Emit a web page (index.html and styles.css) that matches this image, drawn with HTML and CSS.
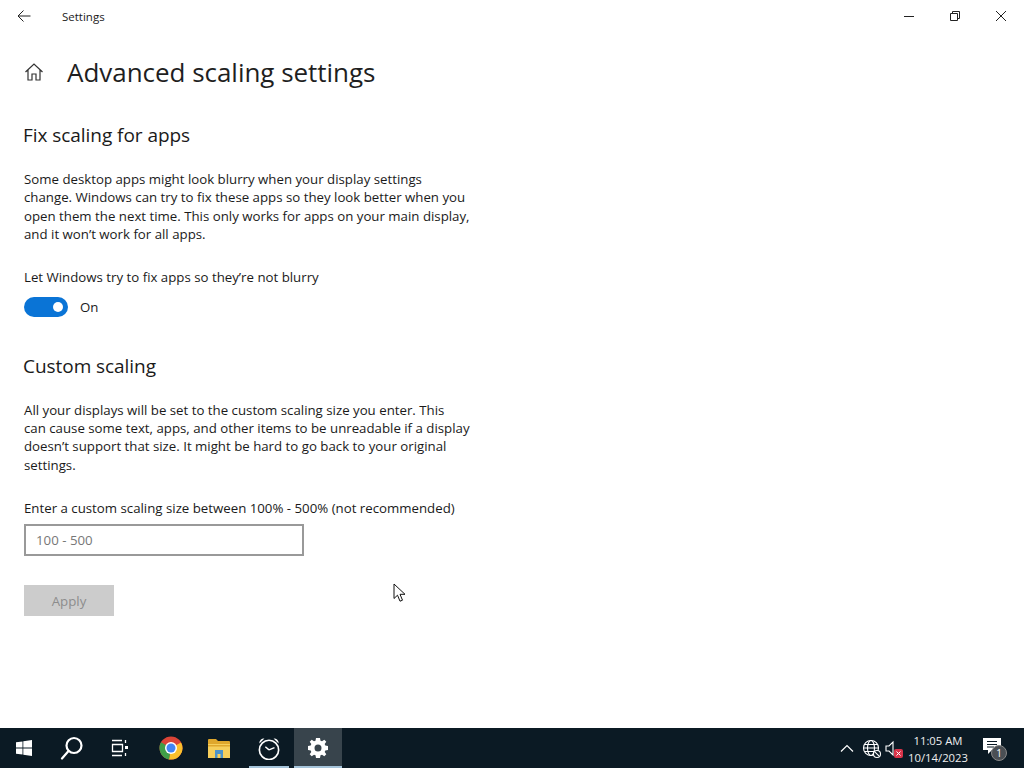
FILE: index.html
```html
<!DOCTYPE html>
<html lang="en">
<head>
<meta charset="utf-8">
<title>Settings</title>
<link rel="stylesheet" href="styles.css">
</head>
<body>
<div class="window">
  <header class="titlebar">
    <button class="back" aria-label="Back">
      <svg width="14" height="14" viewBox="0 0 14 14" class="stroke-dark"><path d="M1 7H13.500M6.500 1.500 1 7l5.500 5.500"/></svg>
    </button>
    <span class="app-name">Settings</span>
    <div class="controls">
      <span class="ctl"><svg width="12" height="12" viewBox="0 0 12 12" class="stroke-dark"><path d="M1 6.500H11"/></svg></span>
      <span class="ctl"><svg width="12" height="12" viewBox="0 0 12 12" class="stroke-dark"><path d="M1.500 3.500h7v7h-7zM3.500 3.500v-2h7v7h-2"/></svg></span>
      <span class="ctl"><svg width="12" height="12" viewBox="0 0 12 12" class="stroke-dark"><path d="M1 1 11 11M11 1 1 11"/></svg></span>
    </div>
  </header>
  <main class="content">
    <div class="page-head">
      <svg class="home" width="20" height="20" viewBox="0 0 20 20"><path d="M1.500 10 10 2l8.500 8M4 8v10h4v-6h4v6h4V8"/></svg>
      <h1>Advanced scaling settings</h1>
    </div>
    <h2 class="first">Fix scaling for apps</h2>
    <p class="para">Some desktop apps might look blurry when your display settings<br>change. Windows can try to fix these apps so they look better when you<br>open them the next time. This only works for apps on your main display,<br>and it won’t work for all apps.</p>
    <div class="label label-toggle">Let Windows try to fix apps so they’re not blurry</div>
    <div class="toggle-row">
      <span class="toggle"><span class="knob"></span></span>
      <span class="toggle-text">On</span>
    </div>
    <h2 class="second">Custom scaling</h2>
    <p class="para">All your displays will be set to the custom scaling size you enter. This<br>can cause some text, apps, and other items to be unreadable if a display<br>doesn’t support that size. It might be hard to go back to your original<br>settings.</p>
    <div class="label label-input">Enter a custom scaling size between 100% - 500% (not recommended)</div>
    <div class="input">100 - 500</div>
    <div class="apply">Apply</div>
  </main>
  <footer class="taskbar">
    <div class="task-left">
      <span class="tb"><svg width="16" height="16" viewBox="0 0 16 16" fill="#fff"><path d="M0 2.300 6.500 1.400V7.600H0zM7.300 1.300 16 0V7.600H7.300zM0 8.400H6.500V14.600L0 13.700zM7.300 8.400H16V16L7.300 14.700z"/></svg></span>
      <span class="tb"><svg width="24" height="24" viewBox="0 0 24 24" fill="none" stroke="#fff" stroke-width="2.200"><circle cx="14" cy="9.500" r="7.500"/><path d="M8.500 15 2 22.500" stroke-linecap="round"/></svg></span>
      <span class="tb"><svg width="18" height="18" viewBox="0 0 18 18" fill="none" stroke="#fff" stroke-width="1.300"><path d="M1 1.500H11M1 16.500H11M1.500 5.500h10v7h-10zM14.500 1v3M14.500 14v3"/><path d="M14 7h3v3h-3z" fill="#fff" stroke="none"/></svg></span>
      <span class="tb tb-chrome"><svg width="24" height="24" viewBox="0 0 24 24"><circle cx="12" cy="12" r="11.500" fill="#db4437"/><path d="M12 12 22 6.500A11.500 11.500 0 0 1 10 23.400z" fill="#fbc02d"/><path d="M12 12 10 23.400A11.500 11.500 0 0 1 2 6.300z" fill="#3f9e47"/><circle cx="12" cy="12" r="6" fill="#fff"/><circle cx="12" cy="12" r="4.500" fill="#4285f4"/></svg></span>
      <span class="tb"><svg width="22" height="19" viewBox="0 0 22 19"><path d="M0 1a1 1 0 0 1 1-1h7l2 2h11a1 1 0 0 1 1 1v4H0z" fill="#dfa72c"/><path d="M0 5h22v14H0z" fill="#f6cf5c"/><path d="M7 11h8v8H7z" fill="#4d93c9"/><path d="M9.500 15h3v4h-3z" fill="#f6cf5c"/><path d="M0 6h22v1.500H0z" fill="#dfa72c"/></svg></span>
      <span class="tb tb-clock"><svg width="22" height="23" viewBox="0 0 24 25" fill="none" stroke="#fff"><path d="M1.500 7A5 5 0 0 1 7 1.500zM22.500 7A5 5 0 0 0 17 1.500z" fill="#fff" stroke="none"/><circle cx="12" cy="14" r="10.500" fill="#0b1a24" stroke-width="1.800"/><path d="M12 14 8 10.500M12 14 18 11.500" stroke-width="1.500"/></svg></span>
      <span class="tb tb-gear active"><svg width="20" height="20" viewBox="0 0 20 20"><path fill="#fff" fill-rule="evenodd" d="M8 0h4l.5 2.700 1.500.6L16.300 1.700 18.300 3.700 16.700 6l.6 1.500L20 8v4l-2.700.5-.6 1.500 1.600 2.300-2 2-2.300-1.600-1.500.6L12 20H8l-.5-2.700-1.500-.6-2.300 1.600-2-2L3.300 14l-.6-1.500L0 12V8l2.700-.5.6-1.500L1.700 3.700l2-2L6 3.300l1.500-.6zM10 6.500a3.500 3.500 0 1 0 0 7 3.500 3.500 0 0 0 0-7z"/></svg></span>
    </div>
    <div class="tray">
      <svg class="tray-up" width="14" height="8" viewBox="0 0 14 8" fill="none" stroke="#fff" stroke-width="1.200"><path d="M1 7.500 7 1.500l6 6"/></svg>
      <svg class="tray-net" width="20" height="20" viewBox="0 0 20 20" fill="none" stroke="#fff" stroke-width="1.100"><circle cx="9" cy="9" r="7.500"/><ellipse cx="9" cy="9" rx="3.500" ry="7.500"/><path d="M1.500 9h15M2.500 5.500h13M2.500 12.500h13"/><circle cx="15" cy="15" r="3.500" fill="#0b1a24"/><path d="M12.800 12.800l4.400 4.400"/></svg>
      <svg class="tray-vol" width="20" height="20" viewBox="0 0 20 20"><path d="M1 7h3l4-4v13l-4-4H1z" fill="none" stroke="#fff" stroke-width="1.100"/><rect x="9" y="10" width="9" height="9" rx="2" fill="#d9344a"/><path d="M11.500 12.500l4 4M15.500 12.500l-4 4" stroke="#fff"/></svg>
      <div class="clock"><span>11:05 AM</span><span>10/14/2023</span></div>
      <div class="notif">
        <svg width="18" height="16" viewBox="0 0 18 16"><path fill="#fff" d="M0 0h18v12H9l-4 4v-4H0z"/><path d="M4 3.500h10M4 6.500h10M4 9h7" stroke="#0b1a24"/></svg>
        <span class="badge">1</span>
      </div>
    </div>
  </footer>
</div>
<svg class="cursor" width="13" height="20" viewBox="0 0 13 20"><path d="M1 1v14.500l3.500-3.300 2.500 6 2.500-1-2.500-5.900H12z" fill="#fff" stroke="#111" stroke-width="1"/></svg>
</body>
</html>
```
FILE: styles.css
```css
* { box-sizing: border-box; }
html, body { margin: 0; height: 100%; }
body { position: relative; font-family: "Open Sans", "Noto Sans", sans-serif; color: #1a1a1a; background: #fff; overflow: hidden; }
.window { display: flex; flex-direction: column; height: 768px; }
.titlebar { display: flex; align-items: center; height: 32px; flex: none; }
.back { display: flex; align-items: center; justify-content: center; width: 48px; height: 32px; padding: 0; border: 0; background: none; }
.stroke-dark { fill: none; stroke: #222; stroke-width: 1; }
.app-name { margin-left: 14px; font-size: 11.500px; }
.controls { display: flex; margin-left: auto; }
.ctl { display: flex; align-items: center; justify-content: center; width: 46px; height: 32px; }
.content { flex: 1; padding-left: 24px; }
.page-head { display: flex; align-items: center; margin-top: 22px; height: 36px; }
.home { fill: none; stroke: #333; stroke-width: 1.200; flex: none; margin-right: 23px; }
h1 { margin: 0; font-size: 26px; font-weight: 400; line-height: 36px; color: #1f1f1f; letter-spacing: -.03px; }
h2 { margin: 0 0 0 -1px; font-size: 19px; font-weight: 400; line-height: 26px; letter-spacing: -.05px; }
h2.first { margin-top: 32px; }
h2.second { margin-top: 36px; }
.para { margin: 22px 0 0; font-size: 13.250px; line-height: 18.400px; white-space: nowrap; }
.label { font-size: 13.250px; line-height: 18px; }
.label-toggle { margin-top: 24px; }
.label-input { margin-top: 25px; }
.toggle-row { display: flex; align-items: center; gap: 12px; margin-top: 11px; height: 20px; }
.toggle { display: flex; align-items: center; justify-content: flex-end; width: 44px; height: 20px; padding-right: 5px; border-radius: 10px; background: #0a74d6; }
.knob { width: 10px; height: 10px; border-radius: 50%; background: #fff; }
.toggle-text { font-size: 13.250px; }
.input { display: flex; align-items: center; width: 280px; height: 32px; margin-top: 7px; padding-left: 10px; border: 2px solid #999; font-size: 13.250px; color: #777; }
.apply { display: flex; align-items: center; justify-content: center; width: 90px; height: 31px; margin-top: 29px; background: #ccc; color: #8c8c8c; font-size: 13.250px; }
.taskbar { display: flex; justify-content: space-between; height: 40px; flex: none; background: #0b1a24; color: #fff; }
.task-left { display: flex; }
.tb { display: flex; align-items: center; justify-content: center; width: 48px; height: 40px; }
.tb-chrome { margin-left: 3px; }
.tb-clock { width: 40px; margin-left: 6px; border-bottom: 2px solid #a5c4da; }
.tb-gear { margin-left: 5px; border-bottom: 2px solid #a5c4da; }
.tb-clock svg, .tb-gear svg { margin-top: 2px; }
.active { background: #38444c; }
.tray { display: flex; align-items: center; }
.tray-up { margin-right: 8px; }
.tray-net { margin-right: 3px; margin-top: 1px; }
.tray-vol { margin-right: -5px; margin-top: 2px; }
.clock { display: flex; flex-direction: column; align-items: center; width: 76px; font-size: 11.300px; line-height: 17px; color: #eee; padding-top: 1px; }
.notif { position: relative; display: flex; align-items: center; justify-content: center; width: 44px; height: 40px; margin-left: 4px; }
.notif svg { margin: -4px 20px 0 0; }
.badge { position: absolute; left: 11px; top: 17px; width: 16px; height: 16px; border-radius: 50%; background: #4a4f54; border: 1px solid #888; font-size: 10px; line-height: 14px; text-align: center; }
.cursor { position: absolute; left: 393px; top: 583px; }
```
